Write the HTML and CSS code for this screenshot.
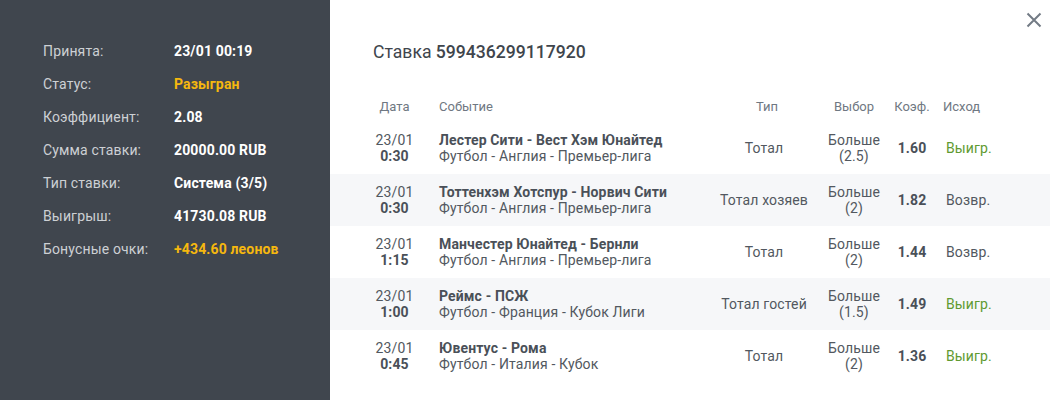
FILE: index.html
```html
<!DOCTYPE html>
<html lang="ru">
<head>
<meta charset="utf-8">
<link rel="stylesheet" href="styles.css">
</head>
<body>
<div class="modal">
  <aside class="side">
    <div class="info-row"><span class="lbl">Принята:</span><span class="val">23/01 00:19</span></div>
    <div class="info-row"><span class="lbl">Статус:</span><span class="val yellow">Разыгран</span></div>
    <div class="info-row"><span class="lbl">Коэффициент:</span><span class="val">2.08</span></div>
    <div class="info-row"><span class="lbl">Сумма ставки:</span><span class="val">20000.00 RUB</span></div>
    <div class="info-row"><span class="lbl">Тип ставки:</span><span class="val">Система (3/5)</span></div>
    <div class="info-row"><span class="lbl">Выигрыш:</span><span class="val">41730.08 RUB</span></div>
    <div class="info-row"><span class="lbl">Бонусные очки:</span><span class="val yellow">+434.60 леонов</span></div>
  </aside>
  <main class="main">
    <button class="close" aria-label="Закрыть">
      <svg width="16" height="16" viewBox="0 0 16 16"><path d="M1.5 1.5 L14.5 14.5 M14.5 1.5 L1.5 14.5" stroke="#737b85" stroke-width="2" fill="none"/></svg>
    </button>
    <h1 class="title">Ставка <span class="num">599436299117920</span></h1>
    <table class="bets">
      <thead>
        <tr>
          <th class="c-date">Дата</th>
          <th class="c-event">Событие</th>
          <th class="c-type">Тип</th>
          <th class="c-pick">Выбор</th>
          <th class="c-odd">Коэф.</th>
          <th class="c-res">Исход</th>
        </tr>
      </thead>
      <tbody>
        <tr>
          <td class="c-date">23/01<br><b>0:30</b></td>
          <td class="c-event"><b>Лестер Сити - Вест Хэм Юнайтед</b><br>Футбол - Англия - Премьер-лига</td>
          <td class="c-type">Тотал</td>
          <td class="c-pick">Больше<br>(2.5)</td>
          <td class="c-odd">1.60</td>
          <td class="c-res win">Выигр.</td>
        </tr>
        <tr>
          <td class="c-date">23/01<br><b>0:30</b></td>
          <td class="c-event"><b>Тоттенхэм Хотспур - Норвич Сити</b><br>Футбол - Англия - Премьер-лига</td>
          <td class="c-type">Тотал хозяев</td>
          <td class="c-pick">Больше<br>(2)</td>
          <td class="c-odd">1.82</td>
          <td class="c-res">Возвр.</td>
        </tr>
        <tr>
          <td class="c-date">23/01<br><b>1:15</b></td>
          <td class="c-event"><b>Манчестер Юнайтед - Бернли</b><br>Футбол - Англия - Премьер-лига</td>
          <td class="c-type">Тотал</td>
          <td class="c-pick">Больше<br>(2)</td>
          <td class="c-odd">1.44</td>
          <td class="c-res">Возвр.</td>
        </tr>
        <tr>
          <td class="c-date">23/01<br><b>1:00</b></td>
          <td class="c-event"><b>Реймс - ПСЖ</b><br>Футбол - Франция - Кубок Лиги</td>
          <td class="c-type">Тотал гостей</td>
          <td class="c-pick">Больше<br>(1.5)</td>
          <td class="c-odd">1.49</td>
          <td class="c-res win">Выигр.</td>
        </tr>
        <tr>
          <td class="c-date">23/01<br><b>0:45</b></td>
          <td class="c-event"><b>Ювентус - Рома</b><br>Футбол - Италия - Кубок</td>
          <td class="c-type">Тотал</td>
          <td class="c-pick">Больше<br>(2)</td>
          <td class="c-odd">1.36</td>
          <td class="c-res win">Выигр.</td>
        </tr>
      </tbody>
    </table>
  </main>
</div>
</body>
</html>
```

FILE: styles.css
```css
* { box-sizing: border-box; }
html, body { margin: 0; padding: 0; }
body {
  font-family: Roboto, "Liberation Sans", Arial, sans-serif;
  background: #ffffff;
  width: 1050px;
  height: 400px;
  overflow: hidden;
}
.modal {
  display: flex;
  height: 400px;
}
.side {
  width: 330px;
  flex: none;
  background: #40464e;
  padding: 34px 0 0 43px;
}
.info-row {
  display: flex;
  height: 33px;
  align-items: center;
  font-size: 14px;
  letter-spacing: 0.15px;
}
.lbl {
  width: 131px;
  color: #cdd0d4;
}
.val {
  color: #ffffff;
  font-weight: 700;
}
.val.yellow { color: #f6b80e; }

.main {
  flex: 1;
  position: relative;
  padding-top: 40px;
}
.close {
  position: absolute;
  top: 11px;
  right: 7px;
  width: 18px;
  height: 18px;
  padding: 1px;
  border: 0;
  background: none;
  display: flex;
}
.title {
  margin: 0 0 0 43px;
  font-size: 17.6px;
  font-weight: 400;
  line-height: 24px;
  color: #40454c;
}
.title .num { font-weight: 500; }

.bets {
  margin-top: 26px;
  width: 100%;
  border-collapse: collapse;
  table-layout: fixed;
  font-size: 14px;
  letter-spacing: 0.14px;
  color: #525860;
}
.bets th {
  font-weight: 400;
  font-size: 13px;
  letter-spacing: 0;
  color: #6f7882;
  height: 32px;
  padding: 0;
  vertical-align: middle;
}
.bets td {
  height: 52px;
  padding: 0;
  line-height: 16px;
  vertical-align: middle;
}
.bets tbody tr:nth-child(even) td { background: #f6f7f9; }
.bets b { font-weight: 700; color: #4a5058; }
.c-date { width: 109px; padding-left: 20px !important; text-align: center; }
.c-event { width: 275px; text-align: left; }
.c-type { width: 100px; text-align: center; }
th.c-type { padding-left: 6px !important; }
.c-pick { width: 80px; text-align: center; }
.c-odd { width: 36px; text-align: center; }
td.c-odd { font-weight: 700; color: #4a5058; }
.c-res { text-align: left; padding-left: 13px !important; }
td.c-res { padding-left: 16px !important; }
.c-res.win { color: #5f9a31; }
```
